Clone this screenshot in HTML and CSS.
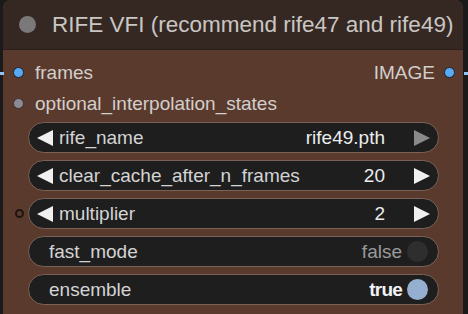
FILE: index.html
```html
<!DOCTYPE html>
<html lang="en">

<head>
  <meta charset="UTF-8" />
  <meta name="viewport" content="width=device-width, initial-scale=1.0" />
  <title>RIFE VFI</title>
  <link rel="stylesheet" href="styles.css">
</head>

<body>
  <div class="node">
    <div class="title">
      <span class="title-dot"></span>
      <span class="title-text">RIFE VFI (recommend rife47 and rife49)</span>
    </div>
    <div class="content">
      <div class="slot">
        <div class="slot-in">
          <span class="dot blue"></span>
          <span>frames</span>
        </div>
        <div class="slot-out">
          <span>IMAGE</span>
          <span class="dot blue"></span>
        </div>
      </div>
      <div class="slot">
        <div class="slot-in">
          <span class="dot gray"></span>
          <span>optional_interpolation_states</span>
        </div>
      </div>

      <div class="widgets">
        <div class="widget">
          <span class="arrow left"></span>
          <span class="label">rife_name</span>
          <span class="value">rife49.pth</span>
          <span class="arrow right dim"></span>
        </div>
        <div class="widget">
          <span class="arrow left"></span>
          <span class="label">clear_cache_after_n_frames</span>
          <span class="value">20</span>
          <span class="arrow right"></span>
        </div>
        <div class="widget">
          <span class="in-ring"></span>
          <span class="arrow left"></span>
          <span class="label">multiplier</span>
          <span class="value">2</span>
          <span class="arrow right"></span>
        </div>
        <div class="widget toggle">
          <span class="label">fast_mode</span>
          <span class="value off">false</span>
          <span class="knob"></span>
        </div>
        <div class="widget toggle">
          <span class="label">ensemble</span>
          <span class="value on">true</span>
          <span class="knob lit"></span>
        </div>
      </div>
    </div>
    <span class="link" style="top: 72px; left: -3px;"></span>
    <span class="link" style="top: 72px; right: -5px;"></span>
  </div>
</body>

</html>
```

FILE: styles.css
```css
* {
  margin: 0;
  padding: 0;
  box-sizing: border-box;
}

body {
  background-color: #1b1a1a;
  font-family: "Liberation Sans", Arial, sans-serif;
  width: 468px;
  height: 314px;
  overflow: hidden;
}

.node {
  position: relative;
  margin-left: 3px;
  width: 460px;
  height: 320px;
  background-color: #5a3a2c;
  border-radius: 8px 8px 0 0;
}

.title {
  height: 50px;
  display: flex;
  align-items: center;
  background-color: #352822;
  border-radius: 8px 8px 0 0;
  border-bottom: 1px solid #2a1f1a;
  padding-left: 16px;
}

.title-dot {
  width: 17px;
  height: 17px;
  border-radius: 50%;
  background-color: #7a7878;
  margin-right: 16px;
}

.title-text {
  color: #c9c6c4;
  font-size: 22.5px;
  white-space: nowrap;
}

.content {
  padding-top: 7px;
}

.slot {
  height: 31px;
  display: flex;
  align-items: center;
  justify-content: space-between;
  color: #d2cfcd;
  font-size: 19px;
}

.slot-in,
.slot-out {
  display: flex;
  align-items: center;
}

.slot-in {
  padding-left: 10px;
}

.slot-in .dot {
  margin-right: 11px;
}

.slot-out {
  padding-right: 8px;
}

.slot-out .dot {
  margin-left: 9px;
}

.dot {
  width: 11px;
  height: 11px;
  border-radius: 50%;
  border: 1.5px solid #1c2230;
}

.dot.blue {
  background-color: #58aaf2;
}

.dot.gray {
  background-color: #8c8a92;
  border-color: #3a3236;
}

.widgets {
  display: flex;
  flex-direction: column;
  gap: 7px;
  margin-top: 3px;
  padding: 0 24px 0 25px;
}

.widget {
  position: relative;
  height: 31px;
  display: flex;
  align-items: center;
  background-color: #1e1e1f;
  border: 1.5px solid #7a6258;
  border-radius: 16px;
  padding: 0 8px;
  font-size: 19px;
  color: #d4d4d4;
  white-space: nowrap;
}

.widget.toggle {
  padding-left: 20px;
  padding-right: 10px;
}

.label {
  flex: 1;
}

.value {
  color: #ececec;
  margin-right: 29px;
}

.value.off {
  color: #9a9a9a;
  margin-right: 5px;
}

.value.on {
  color: #f2f2f2;
  font-weight: bold;
  letter-spacing: -0.8px;
  margin-right: 5px;
}

.arrow {
  width: 0;
  height: 0;
  border-top: 8px solid transparent;
  border-bottom: 8px solid transparent;
}

.arrow.left {
  border-right: 16px solid #f0f0f0;
  margin-right: 6px;
}

.arrow.right {
  border-left: 16px solid #f0f0f0;
}

.arrow.dim {
  border-left-color: #8a8a8a;
}

.knob {
  width: 21px;
  height: 21px;
  border-radius: 50%;
  background-color: #2e2e2f;
}

.knob.lit {
  background-color: #94afd0;
}

.in-ring {
  position: absolute;
  left: -14px;
  top: 10px;
  width: 9px;
  height: 9px;
  border-radius: 50%;
  border: 2px solid #1e1410;
  background-color: #5a3a2c;
}

.link {
  position: absolute;
  width: 4px;
  height: 3px;
  background-color: #8fc4f0;
}
```
